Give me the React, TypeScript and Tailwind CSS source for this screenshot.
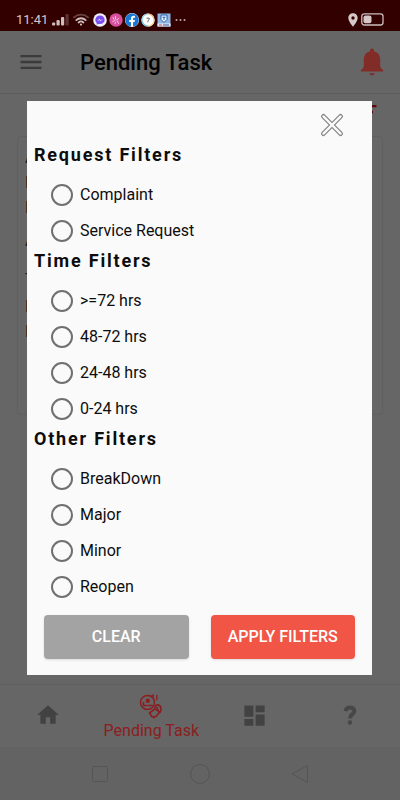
import type { ReactNode } from "react";
import { FaFacebook } from "react-icons/fa";
import { MdDashboard, MdFilterList, MdHome, MdLocationOn, MdMenu } from "react-icons/md";

type FilterGroup = {
  name: string;
  title: string;
  options: string[];
};

const filterGroups: FilterGroup[] = [
  { name: "request", title: "Request Filters", options: ["Complaint", "Service Request"] },
  { name: "time", title: "Time Filters", options: [">=72 hrs", "48-72 hrs", "24-48 hrs", "0-24 hrs"] },
  { name: "other", title: "Other Filters", options: ["BreakDown", "Major", "Minor", "Reopen"] },
];

function SignalIcon() {
  return (
    <svg viewBox="0 0 17 13" className="h-[13px] w-[17px]" fill="#d0bfbf">
      <rect x="0" y="9.5" width="3.2" height="3" rx="1" />
      <rect x="4.5" y="7" width="3.2" height="5.5" rx="1" />
      <rect x="9" y="4" width="3.2" height="8.5" rx="1" />
      <rect x="13.5" y="1" width="3.2" height="11.5" rx="1" fill="#5c3333" />
    </svg>
  );
}

function WifiIcon() {
  return (
    <svg viewBox="0 0 16 13" className="h-[13px] w-4" fill="none" strokeLinecap="round" strokeWidth="1.8">
      <path d="M1 4.4a10.4 10.4 0 0 1 14 0" stroke="#6b4545" />
      <path d="M3.3 7.1a6.9 6.9 0 0 1 9.4 0" stroke="#d0bfbf" />
      <path d="M5.6 9.5a3.6 3.6 0 0 1 4.8 0" stroke="#d0bfbf" />
      <circle cx="8" cy="11.6" r="1.1" fill="#d0bfbf" />
    </svg>
  );
}

function MessengerIcon() {
  return (
    <svg viewBox="0 0 14 14" className="h-[14px] w-[14px]">
      <circle cx="7" cy="7" r="6.8" fill="#f3effa" />
      <path
        d="M7 2.4c-2.7 0-4.7 1.9-4.7 4.4 0 1.3.5 2.4 1.4 3.2v1.7l1.6-.8c.5.2 1.1.2 1.7.2 2.700 0 4.700-1.900 4.700-4.300S9.700 2.400 7 2.400z"
        fill="#7a4df0"
      />
      <path d="M4.200 8.200l2-2.200 1.600 1.200 2-1.400-2 2.300-1.500-1.200z" fill="#fff" />
    </svg>
  );
}

function PinkAppIcon() {
  return (
    <svg viewBox="0 0 14 14" className="h-[14px] w-[14px]" fill="none">
      <circle cx="7" cy="7" r="6.7" fill="#d84f9c" />
      <path d="M4 4.5l1 2M6.500 3.500v2.500M3.800 8.500l2.200-1M8.500 8l1 2.500M9.500 5.500L7.500 7M6 10.500l.8-1.500" stroke="#f7c9e2" strokeLinecap="round" />
    </svg>
  );
}

function RingAppIcon() {
  return (
    <svg viewBox="0 0 14 14" className="h-[14px] w-[14px]" fill="none">
      <circle cx="7" cy="7" r="6.6" fill="#fff" />
      <path d="M7 1a6 6 0 0 1 6 6" stroke="#f3b98a" strokeWidth="1.2" />
      <path d="M13 7a6 6 0 0 1-6 6" stroke="#f3d98a" strokeWidth="1.2" />
      <path d="M7 13a6 6 0 0 1-6-6" stroke="#6cc3cf" strokeWidth="1.2" />
      <path d="M1 7a6 6 0 0 1 6-6" stroke="#8fd0ea" strokeWidth="1.2" />
      <path d="M5.500 5.200h2.800c.2 1.500-1.500 1.900-1.500 4" stroke="#666" />
    </svg>
  );
}

function BadgeAppIcon() {
  return (
    <svg viewBox="0 0 14 14" className="h-[14px] w-[14px]" fill="none">
      <rect x="0.5" y="0.5" width="13" height="13" fill="#8fb8e6" />
      <rect x="0.5" y="10.5" width="13" height="3" fill="#e6edf7" />
      <path d="M4 2h6v4.500L7 9.500 4 6.500z" fill="#f4f8ff" stroke="#1f5fa8" />
      <path d="M5.500 4.200h3M7 4v3" stroke="#1f5fa8" />
      <path d="M2 12h3" stroke="#d23c4b" />
      <path d="M6 12h6" stroke="#394b8a" />
    </svg>
  );
}

function BatteryIcon() {
  return (
    <svg viewBox="0 0 23 13" className="h-[13px] w-[23px]">
      <rect x="0.8" y="0.8" width="21.2" height="11.2" rx="2.5" fill="none" stroke="#d0bfbf" strokeWidth="1.3" />
      <rect x="2.5" y="2.500" width="8" height="7.800" rx="2" fill="#d6c6c6" />
    </svg>
  );
}

function BellIcon() {
  return (
    <svg viewBox="0 0 24 28" className="h-7 w-6" fill="#822c28">
      <path d="M12 .5c1.300 0 2 .9 2 2v.7c3.800.9 6.200 4 6.200 8v6.300c0 2.200 1 3.300 3 4.600v1.400H.8v-1.400c2-1.300 3-2.400 3-4.600v-6.300c0-4 2.400-7.100 6.200-8v-.7c0-1.100.7-2 2-2z" />
      <path d="M9.200 25.200h5.600c-.4 1.500-1.500 2.100-2.800 2.100s-2.400-.6-2.800-2.100z" />
    </svg>
  );
}

function CloseIcon() {
  return (
    <svg viewBox="0 0 24 24" className="h-6 w-6" fill="none" strokeLinecap="round">
      <path d="M3.400 3.400l17.200 17.200M20.600 3.400L3.400 20.600" stroke="#858585" strokeWidth="4.800" />
      <path d="M3.400 3.400l17.200 17.200M20.600 3.400L3.400 20.600" stroke="#fafafa" strokeWidth="2.300" />
    </svg>
  );
}

// person in a ring, with a wrench hand reaching out of it
function TaskIcon() {
  return (
    <svg viewBox="0 0 24 26" className="h-[26px] w-6" fill="none" stroke="#8c1d20" strokeLinecap="round">
      <circle cx="8.5" cy="9.5" r="7" strokeWidth="1.5" />
      <circle cx="8.800" cy="7.800" r="2.200" fill="#8c1d20" stroke="none" />
      <path d="M4.500 9.500v3h3.200M9.500 12.500h3.500" strokeWidth="1.700" />
      <path d="M12 3.200l2.200-1.200v2.200" strokeWidth="1.200" />
      <path d="M17.800 2.500v4.300" strokeWidth="1.300" />
      <path d="M16 14.500l.8-2c1.700-1.300 4.200-.4 5 1.800.6 1.800.1 3.700-1 5.200" strokeWidth="1.700" />
      <path d="M10.500 20l5.500-4.200 4.800 3.200-3.800 4.500-4 .3z" strokeWidth="1.600" strokeLinejoin="round" />
      <path d="M18 14.500l.8 2M15 23.500v1.500" strokeWidth="1.600" />
    </svg>
  );
}

function QuestionIcon() {
  return (
    <svg viewBox="0 0 14 20" className="h-5 w-[14px]" fill="none" stroke="#474747" strokeWidth="4">
      <path d="M2.500 6.200C3 3.600 4.800 2.500 7 2.500c2.600 0 4.400 1.400 4.400 3.500 0 3.400-4.400 3-4.400 7.500" />
      <circle cx="7" cy="17.500" r="2.200" fill="#474747" stroke="none" />
    </svg>
  );
}

function StatusBar() {
  return (
    <div className="flex h-[31px] items-center justify-between bg-[#330000] px-4 pt-2">
      <div className="flex items-center gap-[2px]">
        <span className="mr-[2px] text-[13px] text-[#d6c8c8]">11:41</span>
        <SignalIcon />
        <span className="mx-[2px]">
          <WifiIcon />
        </span>
        <MessengerIcon />
        <PinkAppIcon />
        <FaFacebook className="h-[14px] w-[14px] rounded-full bg-white text-[#1877d2]" />
        <RingAppIcon />
        <BadgeAppIcon />
        <svg viewBox="0 0 12 4" className="ml-[2px] h-1 w-3" fill="#c0aaaa">
          <circle cx="1.5" cy="2" r="1" />
          <circle cx="5.5" cy="2" r="1" />
          <circle cx="9.5" cy="2" r="1" />
        </svg>
      </div>
      <div className="flex items-center">
        <MdLocationOn className="h-4 w-4 text-[#d6c8c8]" />
        <BatteryIcon />
      </div>
    </div>
  );
}

function Header() {
  return (
    <header className="flex h-[63px] items-center border-b border-[#5c5c5c] pr-4 pl-[17px]">
      <button type="button" aria-label="Menu">
        <MdMenu className="h-7 w-7 text-[#3b3b3b]" />
      </button>
      <h1 className="ml-[35px] flex-1 text-[22px] font-medium text-black">Pending Task</h1>
      <button type="button" aria-label="Notifications">
        <BellIcon />
      </button>
    </header>
  );
}

function TaskList() {
  return (
    <main className="flex-1">
      <div className="flex h-[42px] justify-end pt-1 pr-5">
        <MdFilterList className="h-7 w-7 text-[#5c0a10]" />
      </div>
      <article className="mx-[17px] h-[279px] rounded-sm border border-[#606060] pt-2 pl-[7px] text-base leading-[25px] text-[#1c1c1c]">
        <p>A</p>
        <p>N</p>
        <p>N</p>
        <p className="mt-2">A</p>
        <p className="mt-2">-</p>
        <p className="mt-2">N</p>
        <p>R</p>
      </article>
    </main>
  );
}

function NavItem({ label, children }: { label: string; children: ReactNode }) {
  return (
    <a href="#" aria-label={label} className="flex flex-1 items-center justify-center pb-[2px] text-[#424242]">
      {children}
    </a>
  );
}

function BottomNav() {
  return (
    <nav className="flex h-[63px] border-t border-[#606060] pr-[2px]">
      <NavItem label="Home">
        <MdHome className="h-[26px] w-[26px]" />
      </NavItem>
      <a href="#" className="flex w-28 flex-col items-center pt-2 text-[#8c1d20]">
        <TaskIcon />
        <span className="text-base leading-6">Pending Task</span>
      </a>
      <NavItem label="Dashboard">
        <MdDashboard className="h-[27px] w-[27px]" />
      </NavItem>
      <NavItem label="Help">
        <QuestionIcon />
      </NavItem>
    </nav>
  );
}

function SystemNav() {
  return (
    <div className="grid h-[53px] grid-cols-3 place-items-center bg-[#636363] px-[50px]">
      <button type="button" aria-label="Recent apps" className="h-4 w-4 rounded-xs border border-[#555555]" />
      <button type="button" aria-label="Home screen" className="h-5 w-5 rounded-full border border-[#555555]" />
      <button type="button" aria-label="Back">
        <svg viewBox="0 0 18 20" className="h-5 w-[18px]" fill="none" stroke="#555555" strokeLinejoin="round">
          <path d="M16.5 1.5v17L1 10z" />
        </svg>
      </button>
    </div>
  );
}

function FilterSection({ group }: { group: FilterGroup }) {
  return (
    <fieldset>
      <legend className="pb-[10px] pl-[7px] text-lg leading-6 font-bold tracking-widest">{group.title}</legend>
      {group.options.map((option) => (
        <label key={option} className="flex h-9 items-center gap-[7px] pl-6 text-base">
          <input
            type="radio"
            name={group.name}
            className="h-[22px] w-[22px] appearance-none rounded-full border-2 border-[#707070] checked:border-[6px] checked:border-[#f05545]"
          />
          {option}
        </label>
      ))}
    </fieldset>
  );
}

function FilterDialog() {
  return (
    <div className="absolute inset-x-0 top-0 bottom-6 flex items-center pr-7 pl-[27px]">
      <form role="dialog" aria-label="Filters" className="w-full bg-[#fafafa] text-[#0d0d0d]">
        <div className="flex h-[42px] justify-end pt-3 pr-7">
          <button type="button" aria-label="Close" className="h-6 w-6">
            <CloseIcon />
          </button>
        </div>
        {filterGroups.map((group) => (
          <FilterSection key={group.name} group={group} />
        ))}
        <div className="grid grid-cols-2 gap-[22px] px-[17px] pt-[10px] pb-4">
          <button type="reset" className="h-11 rounded bg-[#a3a3a3] text-base font-medium text-white shadow">
            CLEAR
          </button>
          <button type="button" className="h-11 rounded bg-[#f05545] text-base font-medium text-white shadow">
            APPLY FILTERS
          </button>
        </div>
      </form>
    </div>
  );
}

export default function App() {
  return (
    <div className="relative flex min-h-screen flex-col bg-[#666666] font-['Roboto',sans-serif]">
      <StatusBar />
      <Header />
      <TaskList />
      <BottomNav />
      <SystemNav />
      <FilterDialog />
    </div>
  );
}
